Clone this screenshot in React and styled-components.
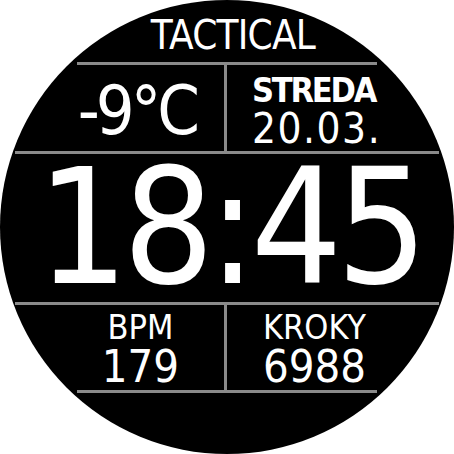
import React from 'react';
import styled, { createGlobalStyle } from 'styled-components';

const Global = createGlobalStyle`
  html, body {
    margin: 0;
    padding: 0;
    background: #fff;
  }
`;

const Face = styled.div`
  width: 454px;
  height: 454px;
  border-radius: 50%;
  background: #000;
  overflow: hidden;
  display: flex;
  flex-direction: column;
  align-items: center;
  color: #fff;
  font-family: "DejaVu Sans Condensed", "DejaVu Sans", sans-serif;
  font-stretch: condensed;
`;

const Title = styled.div`
  height: 62px;
  box-sizing: border-box;
  padding: 15px 0 0 12px;
  font-size: 40px;
  line-height: 40px;
  letter-spacing: -0.75px;
`;

const Block = styled.div`
  width: 300px;
  height: ${p => p.h}px;
  box-sizing: border-box;
  display: grid;
  grid-template-columns: 147px 3px 150px;
  border-top: ${p => (p.top ? '3px solid #8a8a8a' : 'none')};
  border-bottom: ${p => (p.bottom ? '3px solid #8a8a8a' : 'none')};
`;

const Divider = styled.div`
  background: #8a8a8a;
`;

const Rule = styled.div`
  width: 424px;
  height: 3px;
  flex: none;
  background: #8a8a8a;
`;

const Cell = styled.div`
  display: flex;
  flex-direction: column;
  align-items: ${p => p.align || 'center'};
  padding: ${p => p.pad};
  white-space: nowrap;
`;

const Temp = styled.div`
  font-size: 68px;
  line-height: 68px;
  font-weight: 300;
  letter-spacing: -4px;
`;

const Label = styled.div`
  font-size: 34px;
  line-height: 34px;
  font-weight: ${p => (p.bold ? 700 : 400)};
  letter-spacing: ${p => (p.bold ? '-2.2px' : '0')};
`;

const Value = styled.div`
  font-size: ${p => p.size}px;
  line-height: ${p => p.size}px;
  margin-top: ${p => p.gap || 0}px;
  letter-spacing: ${p => p.track || 0}px;
`;

const Time = styled.div`
  height: 148px;
  flex: none;
  box-sizing: border-box;
  padding-left: 5px;
  font-size: 160px;
  line-height: 148px;
  letter-spacing: -6px;
`;

export default function App() {
  return (
    <>
      <Global />
      <Face>
        <Title>TACTICAL</Title>
        <Block h={89} top>
          <Cell align="flex-end" pad="12px 28px 0 0">
            <Temp>-9°C</Temp>
          </Cell>
          <Divider />
          <Cell align="flex-start" pad="8px 0 0 25px">
            <Label bold>STREDA</Label>
            <Value size={42} gap={1} track={1.5}>20.03.</Value>
          </Cell>
        </Block>
        <Rule />
        <Time>18:45</Time>
        <Rule />
        <Block h={88} bottom>
          <Cell pad="5px 20px 0 0">
            <Label>BPM</Label>
            <Value size={45}>179</Value>
          </Cell>
          <Divider />
          <Cell pad="5px 0 0 25px">
            <Label>KROKY</Label>
            <Value size={45}>6988</Value>
          </Cell>
        </Block>
      </Face>
    </>
  );
}
